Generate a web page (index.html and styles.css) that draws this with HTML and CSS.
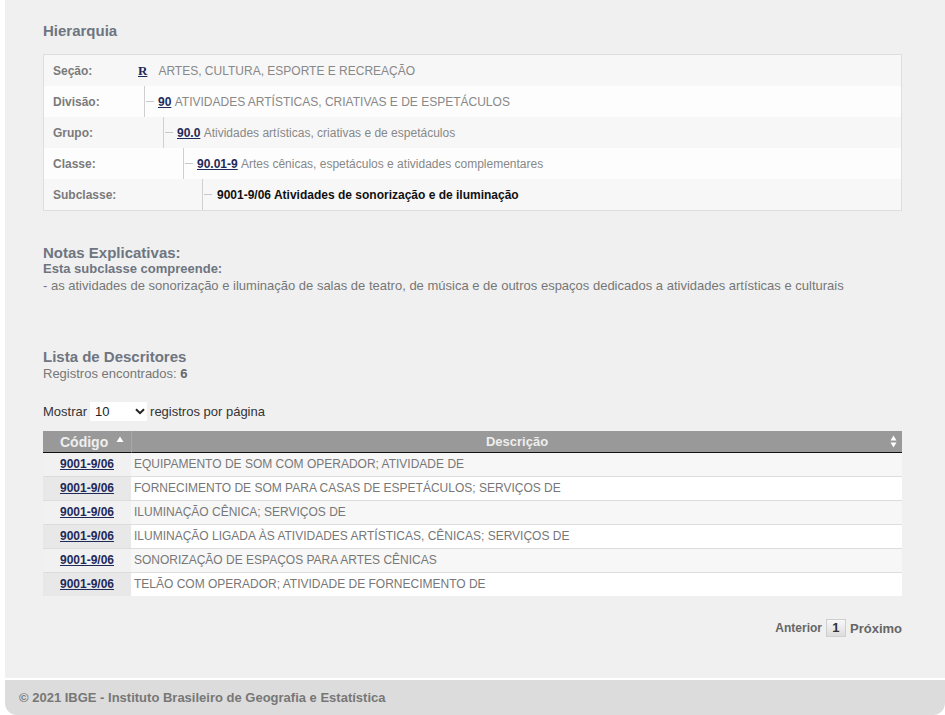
FILE: index.html
```html
<!DOCTYPE html>
<html lang="pt-BR">
<head>
<meta charset="utf-8">
<title>Hierarquia - CNAE</title>
<link rel="stylesheet" href="styles.css">
</head>
<body>
<div class="page">
  <main class="content">
    <h2 class="title">Hierarquia</h2>
    <div class="tree">
      <div class="tree-row odd">
        <div class="tree-label">Seção:</div>
        <div class="tree-value lvl0"><a class="code serif" href="#">R</a><span class="desc">ARTES, CULTURA, ESPORTE E RECREAÇÃO</span></div>
      </div>
      <div class="tree-row even">
        <div class="tree-label">Divisão:</div>
        <div class="tree-value lvl1"><span class="branch"></span><a class="code" href="#">90</a><span class="desc">&nbsp;ATIVIDADES ARTÍSTICAS, CRIATIVAS E DE ESPETÁCULOS</span></div>
      </div>
      <div class="tree-row odd">
        <div class="tree-label">Grupo:</div>
        <div class="tree-value lvl2"><span class="branch"></span><a class="code" href="#">90.0</a><span class="desc">&nbsp;Atividades artísticas, criativas e de espetáculos</span></div>
      </div>
      <div class="tree-row even">
        <div class="tree-label">Classe:</div>
        <div class="tree-value lvl3"><span class="branch"></span><a class="code" href="#">90.01-9</a><span class="desc">&nbsp;Artes cênicas, espetáculos e atividades complementares</span></div>
      </div>
      <div class="tree-row odd">
        <div class="tree-label">Subclasse:</div>
        <div class="tree-value lvl4"><span class="branch"></span><strong class="current">9001-9/06 Atividades de sonorização e de iluminação</strong></div>
      </div>
    </div>

    <section class="notes">
      <h3 class="notes-title">Notas Explicativas:</h3>
      <p class="notes-sub">Esta subclasse compreende:</p>
      <p class="notes-text">- as atividades de sonorização e iluminação de salas de teatro, de música e de outros espaços dedicados a atividades artísticas e culturais</p>
    </section>

    <section class="list">
      <h3 class="list-title">Lista de Descritores</h3>
      <p class="list-count">Registros encontrados: <b>6</b></p>

      <div class="length">
        <span>Mostrar</span>
        <span class="select-wrap">
          <select class="select"><option>10</option><option>25</option><option>50</option></select>
          <svg class="chev" width="10" height="7" viewBox="0 0 10 7"><path d="M1 1.2 L5 5.2 L9 1.2" fill="none" stroke="#222" stroke-width="2"/></svg>
        </span>
        <span>registros por página</span>
      </div>

      <table class="grid">
        <thead>
          <tr>
            <th class="col-code"><span class="th-in">Código <svg class="sort" width="8" height="7" viewBox="0 0 8 7"><path d="M4 0.5 L7.5 6 L0.5 6 Z" fill="#fff"/></svg></span></th>
            <th class="col-desc"><span class="th-center">Descrição</span><svg class="sort-both" width="7" height="13" viewBox="0 0 7 13"><path d="M3.5 0.5 L6.5 5.5 L0.5 5.5 Z M3.5 12.5 L6.5 7.5 L0.5 7.5 Z" fill="#fff"/></svg></th>
          </tr>
        </thead>
        <tbody>
          <tr class="r-odd"><td class="c-code"><a href="#">9001-9/06</a></td><td class="c-desc">EQUIPAMENTO DE SOM COM OPERADOR; ATIVIDADE DE</td></tr>
          <tr class="r-even"><td class="c-code"><a href="#">9001-9/06</a></td><td class="c-desc">FORNECIMENTO DE SOM PARA CASAS DE ESPETÁCULOS; SERVIÇOS DE</td></tr>
          <tr class="r-odd"><td class="c-code"><a href="#">9001-9/06</a></td><td class="c-desc">ILUMINAÇÃO CÊNICA; SERVIÇOS DE</td></tr>
          <tr class="r-even"><td class="c-code"><a href="#">9001-9/06</a></td><td class="c-desc">ILUMINAÇÃO LIGADA ÀS ATIVIDADES ARTÍSTICAS, CÊNICAS; SERVIÇOS DE</td></tr>
          <tr class="r-odd"><td class="c-code"><a href="#">9001-9/06</a></td><td class="c-desc">SONORIZAÇÃO DE ESPAÇOS PARA ARTES CÊNICAS</td></tr>
          <tr class="r-even"><td class="c-code"><a href="#">9001-9/06</a></td><td class="c-desc">TELÃO COM OPERADOR; ATIVIDADE DE FORNECIMENTO DE</td></tr>
        </tbody>
      </table>

      <div class="pager">
        <span class="pg-link pg-prev">Anterior</span>
        <span class="pg-num">1</span>
        <span class="pg-link pg-next">Próximo</span>
      </div>
    </section>
  </main>
  <footer class="footer">© 2021 IBGE - Instituto Brasileiro de Geografia e Estatística</footer>
</div>
</body>
</html>
```
FILE: styles.css
```css
* { box-sizing: border-box; }
html, body { margin: 0; padding: 0; }
body {
  background: #ffffff;
  font-family: "Liberation Sans", Arial, sans-serif;
  font-size: 12px;
  color: #666;
}
.page {
  margin-left: 5px;
  min-height: 715px;
  display: flex;
  flex-direction: column;
}
.content {
  background: #f0f0f0;
  padding: 23px 43px 0 38px;
  height: 678px;
}
.title {
  margin: 0;
  font-size: 15px;
  line-height: 16px;
  font-weight: bold;
  color: #6e7580;
}
.tree {
  margin-top: 15px;
  border: 1px solid #dedede;
  background: #f7f7f7;
}
.tree-row {
  display: flex;
  height: 31px;
  align-items: stretch;
}
.tree-row.odd { background: #f7f7f7; }
.tree-row.even { background: #fdfdfd; }
.tree-label {
  width: 94px;
  flex: none;
  padding-left: 9px;
  display: flex;
  align-items: center;
  font-weight: bold;
  color: #7a7a7a;
}
.tree-value {
  display: flex;
  align-items: center;
  white-space: nowrap;
}
.lvl1 { padding-left: 6px; }
.lvl2 { padding-left: 25px; }
.lvl3 { padding-left: 45px; }
.lvl4 { padding-left: 64px; }
.branch {
  align-self: stretch;
  width: 14px;
  flex: none;
  border-left: 1px solid #d0d0d0;
  display: flex;
  align-items: center;
}
.branch::before {
  content: "";
  display: block;
  width: 8px;
  height: 1px;
  margin-left: 1px;
  background: #c8c8c8;
}
.code {
  color: #1f2a5a;
  font-weight: bold;
  text-decoration: underline;
}
.code.serif {
  font-family: "Liberation Serif", "Times New Roman", serif;
  font-size: 13px;
  margin-right: 11px;
}
.desc { color: #888; }
.current {
  color: #111;
  font-weight: bold;
  padding-left: 1px;
}
.notes { margin-top: 33px; }
.notes-title {
  margin: 0;
  font-size: 15px;
  line-height: 17px;
  font-weight: bold;
  color: #6e7580;
}
.notes-sub {
  margin: 0;
  font-size: 13px;
  font-weight: bold;
  line-height: 16px;
  color: #6e7580;
}
.notes-text {
  margin: 0;
  font-size: 13px;
  line-height: 17px;
  color: #777;
}
.list { margin-top: 54px; }
.list-title {
  margin: 0;
  font-size: 15px;
  line-height: 17px;
  font-weight: bold;
  color: #6e7580;
}
.list-count {
  margin: 0;
  font-size: 13px;
  line-height: 17px;
  color: #777;
}
.list-count b { color: #666; }
.length {
  margin-top: 19px;
  display: flex;
  align-items: center;
  gap: 3px;
  height: 20px;
  font-size: 13px;
  color: #333;
}
.select-wrap {
  display: flex;
  align-items: center;
  background: #fff;
  width: 57px;
  height: 19px;
  padding-right: 2px;
}
.select {
  appearance: none;
  -webkit-appearance: none;
  border: none;
  background: transparent;
  font-family: "Liberation Sans", Arial, sans-serif;
  font-size: 13px;
  color: #222;
  padding: 0 0 0 5px;
  flex: 1;
  min-width: 0;
  height: 19px;
  outline: none;
}
.chev { flex: none; }
.grid {
  margin-top: 10px;
  width: 100%;
  border-collapse: separate;
  border-spacing: 0;
}
.grid th {
  background: #999;
  color: #eee;
  height: 22px;
  padding: 0;
  font-size: 14px;
  font-weight: bold;
  border-bottom: 1px solid #111;
  text-align: left;
}
.col-code { width: 88px; }
.th-in {
  display: flex;
  align-items: center;
  padding-left: 17px;
  gap: 8px;
}
.sort { margin-top: -5px; }
.col-desc {
  border-left: 1px solid #a8a8a8;
  position: relative;
}
.th-center {
  display: block;
  text-align: center;
  font-size: 13px;
}
.sort-both {
  position: absolute;
  right: 5px;
  top: 4px;
}
.grid td {
  padding: 0;
  height: 23px;
  line-height: 23px;
}
.grid tr + tr td { border-top: 1px solid #dddddd; }
.c-code {
  text-align: center;
}
.c-code a {
  color: #1f2a5a;
  font-weight: bold;
  text-decoration: underline;
}
.c-desc {
  padding-left: 3px !important;
  color: #777;
}
.r-odd .c-code { background: #f1f1f1; }
.r-odd .c-desc { background: #f7f7f7; }
.r-even .c-code { background: #e8e8e8; }
.r-even .c-desc { background: #ffffff; }
.pager {
  margin-top: 23px;
  display: flex;
  justify-content: flex-end;
  align-items: center;
  gap: 4px;
  font-weight: bold;
  font-size: 12px;
  height: 18px;
}
.pg-link { color: #666; }
.pg-next { font-size: 13px; }
.pg-num {
  display: inline-block;
  width: 20px;
  height: 18px;
  line-height: 16px;
  text-align: center;
  font-size: 13px;
  border: 1px solid #cfcfcf;
  background: linear-gradient(#f8f8f8, #dcdcdc);
  color: #333;
}
.footer {
  margin-top: 2px;
  height: 35px;
  background: #dcdcdc;
  border-radius: 0 0 12px 12px;
  padding-left: 14px;
  display: flex;
  align-items: center;
  font-weight: bold;
  color: #777;
  font-size: 13px;
}
```
